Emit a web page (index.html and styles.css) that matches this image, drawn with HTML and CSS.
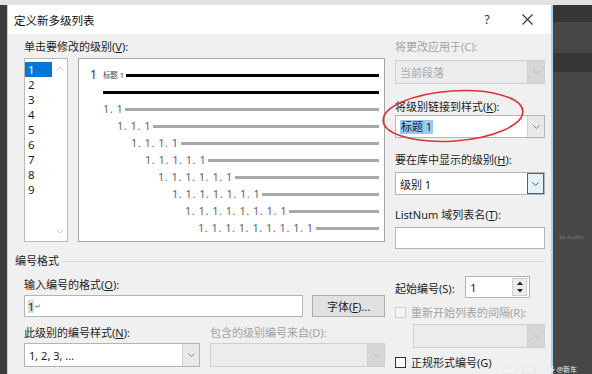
FILE: index.html
```html
<!DOCTYPE html>
<html lang="zh-CN">
<head>
<meta charset="utf-8">
<title>定义新多级列表</title>
<link rel="stylesheet" href="styles.css">
</head>
<body>
<div class="screen">
  <div class="topstrip"></div>
  <div class="main">
    <div class="leftstrip"></div>
    <div class="dialog">
      <div class="titlebar">
        <span class="title">定义新多级列表</span>
        <span class="help">?</span>
        <span class="close"><svg width="11" height="11" viewBox="0 0 11 11"><path d="M0.5 0.5L10.5 10.5M10.5 0.5L0.5 10.5" stroke="#333" stroke-width="1.1" fill="none"/></svg></span>
      </div>
      <div class="body">
        <div class="upper">
          <div class="leftpane">
            <div class="label">单击要修改的级别(<u>V</u>):</div>
            <div class="lrow">
              <div class="listbox">
                <div class="items">
                  <div class="item sel">1</div>
                  <div class="item">2</div>
                  <div class="item">3</div>
                  <div class="item">4</div>
                  <div class="item">5</div>
                  <div class="item">6</div>
                  <div class="item">7</div>
                  <div class="item">8</div>
                  <div class="item">9</div>
                </div>
                <div class="vscroll">
                  <svg width="8" height="5" viewBox="0 0 8 5"><path d="M0.5 4.5L4 1L7.5 4.5" stroke="#c4c4c4" fill="none"/></svg>
                  <svg width="8" height="5" viewBox="0 0 8 5"><path d="M0.5 0.5L4 4L7.5 0.5" stroke="#c4c4c4" fill="none"/></svg>
                </div>
              </div>
              <div class="preview">
                <div class="prow lv1"><span class="n1">1</span><span class="tag">标题 1</span><span class="bar black"></span></div>
                <div class="prow lv1b"><span class="bar black"></span></div>
                <div class="prow lv2"><span class="num">1. 1</span><span class="bar"></span></div>
                <div class="prow lv3"><span class="num">1. 1. 1</span><span class="bar"></span></div>
                <div class="prow lv4"><span class="num">1. 1. 1. 1</span><span class="bar"></span></div>
                <div class="prow lv5"><span class="num">1. 1. 1. 1. 1</span><span class="bar"></span></div>
                <div class="prow lv6"><span class="num">1. 1. 1. 1. 1. 1</span><span class="bar"></span></div>
                <div class="prow lv7"><span class="num">1. 1. 1. 1. 1. 1. 1</span><span class="bar"></span></div>
                <div class="prow lv8"><span class="num">1. 1. 1. 1. 1. 1. 1. 1</span><span class="bar"></span></div>
                <div class="prow lv9"><span class="num">1. 1. 1. 1. 1. 1. 1. 1. 1</span><span class="bar"></span></div>
              </div>
            </div>
          </div>
          <div class="rightpane">
            <div class="label dis">将更改应用于(C):</div>
            <div class="combo disabled c1"><span class="val">当前段落</span><span class="btn"><svg width="7" height="4" viewBox="0 0 7 4"><path d="M0.5 0.5L3.5 3.5L6.5 0.5" stroke="#b0b0b0" fill="none"/></svg></span></div>
            <div class="label l2">将级别链接到样式(<u>K</u>):</div>
            <div class="combo c2"><span class="val"><span class="hl">标题 1</span></span><span class="btn"><svg width="7" height="4" viewBox="0 0 7 4"><path d="M0.5 0.5L3.5 3.5L6.5 0.5" stroke="#888" fill="none"/></svg></span></div>
            <div class="label l3">要在库中显示的级别(<u>H</u>):</div>
            <div class="combo c3"><span class="val">级别 1</span><span class="btn focus"><svg width="7" height="4" viewBox="0 0 7 4"><path d="M0.5 0.5L3.5 3.5L6.5 0.5" stroke="#555" fill="none"/></svg></span></div>
            <div class="label l4">ListNum 域列表名(<u>T</u>):</div>
            <div class="textbox t4"></div>
          </div>
        </div>
        <div class="grouphead"><span>编号格式</span><div class="rule"></div></div>
        <div class="lower">
          <div class="lleft">
            <div class="label lo">输入编号的格式(<u>O</u>):</div>
            <div class="frow">
              <div class="textbox fmt"><span class="hl2">1</span><span class="ret">↵</span></div>
              <div class="button">字体(<u>F</u>)...</div>
            </div>
            <div class="labrow">
              <div class="label ln">此级别的编号样式(<u>N</u>):</div>
              <div class="label dis ld">包含的级别编号来自(D):</div>
            </div>
            <div class="crow">
              <div class="combo c5"><span class="val">1, 2, 3, ...</span><span class="btn"><svg width="7" height="4" viewBox="0 0 7 4"><path d="M0.5 0.5L3.5 3.5L6.5 0.5" stroke="#888" fill="none"/></svg></span></div>
              <div class="combo disabled c6"><span class="val"></span><span class="btn"><svg width="7" height="4" viewBox="0 0 7 4"><path d="M0.5 0.5L3.5 3.5L6.5 0.5" stroke="#b8b8b8" fill="none"/></svg></span></div>
            </div>
          </div>
          <div class="lright">
            <div class="spinrow">
              <span class="label">起始编号(S):</span>
              <div class="spin"><span class="val">1</span><span class="spinbtns"><svg width="6" height="4" viewBox="0 0 6 4"><path d="M0 4L3 0.5L6 4Z" fill="#222"/></svg><svg width="6" height="4" viewBox="0 0 6 4"><path d="M0 0L3 3.5L6 0Z" fill="#222"/></svg></span></div>
            </div>
            <div class="check dis r1"><span class="box"></span><span>重新开始列表的间隔(R):</span></div>
            <div class="combo disabled c7"><span class="val"></span><span class="btn"><svg width="7" height="4" viewBox="0 0 7 4"><path d="M0.5 0.5L3.5 3.5L6.5 0.5" stroke="#b8b8b8" fill="none"/></svg></span></div>
            <div class="check r2"><span class="box"></span><span>正规形式编号(G)</span></div>
          </div>
        </div>
      </div>
    </div>
    <div class="rightside">
      <div class="band b1"></div>
      <div class="band b2"></div>
      <div class="band b3"></div>
      <div class="band b4"><span class="ghost">ds Audio</span></div>
    </div>
  </div>
  <svg class="mark" width="160" height="60" viewBox="0 0 160 60"><ellipse cx="80" cy="30" rx="70" ry="25" transform="rotate(-4 80 30)" stroke="#d9343b" stroke-width="1.6" fill="none"/></svg>
  <div class="watermark"><span class="wbox"></span><span class="wbox"></span><span class="wtext">头条 @新车</span></div>
</div>
</body>
</html>
```

FILE: styles.css
```css
* { box-sizing: border-box; }
body {
  margin: 0;
  width: 592px;
  height: 374px;
  overflow: hidden;
  background: #454545;
  font-family: "Noto Sans", "Noto Sans CJK SC", sans-serif;
  font-size: 11px;
  color: #1e1e1e;
}
u { text-decoration: underline; text-underline-offset: 1px; }
.screen { position: relative; width: 592px; height: 374px; display: flex; flex-direction: column; overflow: hidden; }
.topstrip { flex: none; height: 5px; background: #e2e2e2; }
.main { flex: 1; min-height: 0; display: flex; }
.leftstrip { width: 7px; background: #3b3b3b; }
.dialog { width: 544px; border-left: 1px solid #b7d3ea; background: #f0f0f0; display: flex; flex-direction: column; }
.rightside { flex: 1; border-left: 2px solid #a8d3f0; display: flex; flex-direction: column; }
.band { width: 100%; flex: none; }
.b1 { height: 17px; background: #363636; }
.b2 { height: 31px; background: #474747; }
.b3 { height: 19px; background: #373737; }
.b4 { flex: 1; background: #474747; padding-top: 155px; }
.ghost { font-size: 6px; color: #777; white-space: nowrap; padding-left: 6px; }

.titlebar { flex: none; height: 29px; background: #fff; display: flex; align-items: center; padding-left: 6px; }
.title { flex: 1; font-size: 11.5px; color: #111; }
.help { width: 20px; margin-right: 20px; text-align: center; font-size: 12px; color: #333; }
.close { width: 20px; margin-right: 14px; display: flex; justify-content: center; }

.body { flex: 1; padding: 6px 6px 0 7px; }
.label { line-height: 14px; height: 14px; white-space: nowrap; }
.dis { color: #a3a3a3; }

.upper { margin-left: 9px; display: flex; gap: 10px; }
.leftpane { width: 361px; display: flex; flex-direction: column; }
.leftpane > .label { margin-bottom: 4px; }
.lrow { display: flex; gap: 10px; }
.listbox { width: 44px; height: 184px; background: #fff; border: 1px solid #b9b9b9; display: flex; }
.items { width: 27px; padding-top: 3px; }
.item { height: 15px; line-height: 15px; font-size: 11.5px; padding-left: 3px; color: #222; }
.item.sel { background: #0078d7; color: #fff; }
.vscroll { flex: 1; display: flex; flex-direction: column; justify-content: space-between; align-items: center; padding: 7px 0 7px 0; }

.preview { width: 307px; height: 184px; background: #fff; border: 1px solid #a5a5a5; padding: 7px 5px 0 0; }
.prow { height: 17px; display: flex; align-items: center; }
.n1 { font-size: 12px; color: #333; margin-right: 6px; }
.tag { font-size: 7.5px; color: #444; margin-right: 2px; }
.num { font-size: 11px; letter-spacing: 0.5px; color: #666; white-space: nowrap; margin-right: 2px; }
.bar { flex: 1; height: 3px; background: #a8a8a8; margin-top: 2px; }
.bar.black { background: #000; height: 3px; }
.lv1 { padding-left: 11px; }
.lv1b { padding-left: 24px; }
.lv2 { padding-left: 24px; }
.lv3 { padding-left: 38px; }
.lv4 { padding-left: 52px; }
.lv5 { padding-left: 66px; }
.lv6 { padding-left: 79px; }
.lv7 { padding-left: 93px; }
.lv8 { padding-left: 106px; }
.lv9 { padding-left: 119px; }

.rightpane { width: 150px; display: flex; flex-direction: column; }
.combo { display: flex; height: 24px; background: #fff; border: 1px solid #b4b4b4; }
.combo .val { flex: 1; display: flex; align-items: center; padding-left: 4px; white-space: nowrap; }
.combo .btn { width: 17px; background: #e8e8e8; border-left: 1px solid #d0d0d0; display: flex; align-items: center; justify-content: center; }
.combo.disabled { background: #ececec; border-color: #cfcfcf; color: #a0a0a0; }
.combo.disabled .btn { background: #d6d6d6; border-left-color: #cfcfcf; }
.btn.focus { background: #e5f1fb; border: 1px solid #0078d7; }
.rightpane > .label:first-child { margin-bottom: 6px; }
.c1 .val { color: #a8a8a8; }
.l2 { margin-top: 16px; margin-bottom: 1px; }
.c2 { height: 23px; }
.hl { background: #99c9ef; color: #123; padding: 0 1px; line-height: 14px; }
.l3 { margin-top: 15px; margin-bottom: 5px; }
.c3 { height: 23px; }
.l4 { margin-top: 13px; margin-bottom: 5px; }
.textbox { background: #fff; border: 1px solid #b4b4b4; }
.t4 { height: 22px; }

.grouphead { margin-top: 5px; display: flex; align-items: center; }
.grouphead span { line-height: 14px; }
.rule { flex: 1; height: 1px; background: #dadada; margin-left: 3px; }

.lower { margin-left: 9px; display: flex; gap: 10px; }
.lleft { width: 361px; display: flex; flex-direction: column; }
.lo { margin-top: 10px; }
.frow { margin-top: 3px; display: flex; gap: 9px; }
.fmt { width: 279px; height: 22px; display: flex; align-items: center; padding-left: 3px; }
.hl2 { background: #d8d8d8; font-size: 11px; line-height: 13px; }
.ret { font-size: 7px; color: #666; margin-left: 1px; }
.button { width: 73px; height: 22px; background: #e1e1e1; border: 1px solid #adadad; display: flex; align-items: center; justify-content: center; }
.labrow { margin-top: 9px; display: flex; }
.ln { width: 186px; }
.crow { margin-top: 3px; display: flex; gap: 10px; }
.c5 { width: 176px; }
.c6 { width: 175px; }

.lright { width: 150px; display: flex; flex-direction: column; }
.spinrow { margin-top: 8px; display: flex; align-items: center; height: 22px; }
.spinrow .label { width: 70px; margin-top: 4px; }
.spin { width: 65px; height: 22px; background: #fff; border: 1px solid #b4b4b4; display: flex; }
.spin .val { flex: 1; display: flex; align-items: center; padding-left: 4px; font-size: 11.5px; }
.spinbtns { width: 15px; margin: 1px 2px 1px 0; background: #ececec; border: 1px solid #d0d0d0; display: flex; flex-direction: column; justify-content: space-around; align-items: center; }
.check { display: flex; align-items: center; gap: 5px; height: 14px; white-space: nowrap; }
.check .box { width: 11px; height: 11px; border: 1px solid #333; background: #fff; flex: none; }
.check.dis .box { border-color: #cfcfcf; background: #f4f4f4; }
.r1 { margin-top: 7px; }
.c7 { margin-top: 5px; margin-left: 18px; width: 132px; }
.r2 { margin-top: 7px; }

.mark { position: absolute; left: 373px; top: 86px; }
.watermark { position: absolute; left: 503px; top: 366px; display: flex; gap: 5px; align-items: flex-start; }
.wbox { width: 14px; height: 8px; border: 1.5px solid #e8e8e8; border-radius: 2px; }
.wtext { color: #eee; font-size: 7px; line-height: 8px; }
```
